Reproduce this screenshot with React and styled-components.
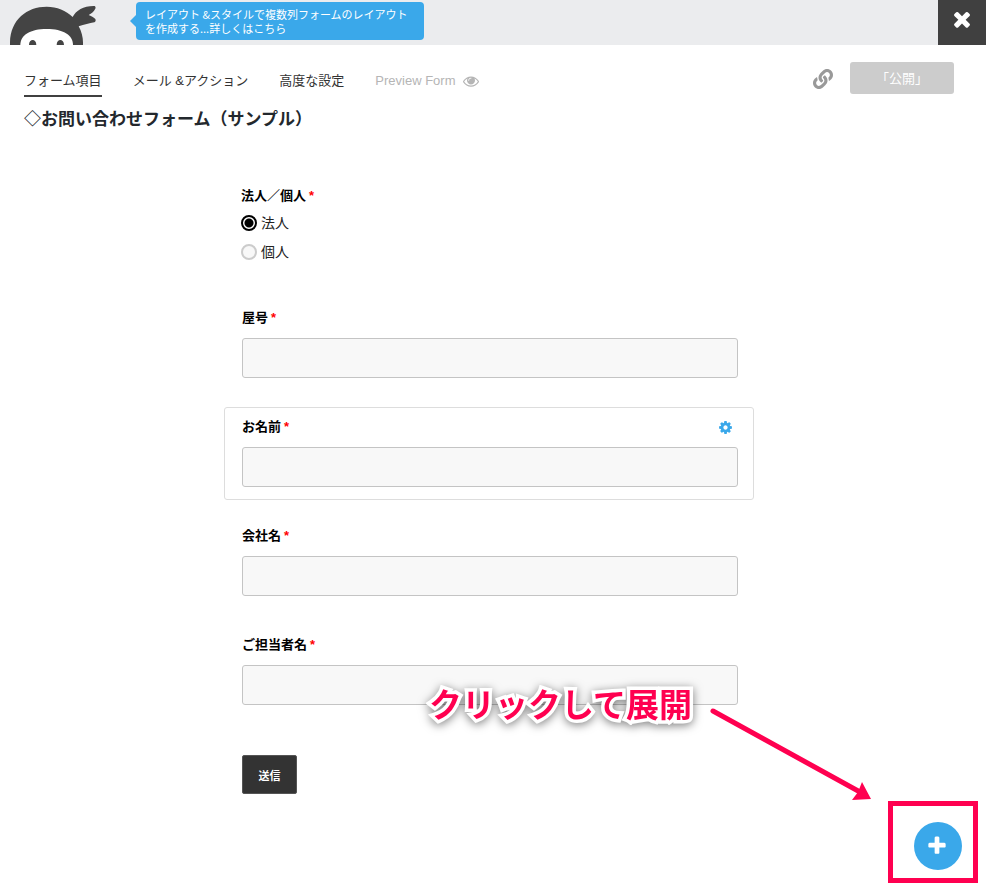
import React, { useState } from 'react';
import styled, { createGlobalStyle } from 'styled-components';
import { FaLink } from 'react-icons/fa';

const GlobalStyle = createGlobalStyle`
  * {
    box-sizing: border-box;
  }

  body {
    margin: 0;
    background: #fff;
    color: #222;
    font-family: "Liberation Sans", "Noto Sans CJK JP", sans-serif;
    font-size: 13px;
    line-height: 20px;
  }

  button, input {
    font-family: inherit;
  }
`;

const Page = styled.div`
  min-height: 100vh;
`;

const TopBar = styled.header`
  display: flex;
  align-items: flex-start;
  height: 45px;
  background: #ebecee;
`;

const LogoLink = styled.a`
  display: flex;
  align-self: flex-end;
  margin-left: 10px;
`;

const Bubble = styled.a`
  position: relative;
  max-width: 288px;
  margin: 2px 0 0 39px;
  padding: 5px 9px;
  border-radius: 4px;
  background: #3aa8ea;
  color: #fff;
  font-family: "Noto Sans CJK JP", sans-serif;
  font-size: 11px;
  line-height: 14px;
  text-decoration: none;

  &::before {
    content: "";
    position: absolute;
    top: 13px;
    left: -6px;
    border: 6px solid transparent;
    border-left-width: 0;
    border-right-color: #3aa8ea;
  }
`;

const CloseButton = styled.button`
  width: 48px;
  height: 45px;
  margin-left: auto;
  padding: 0 0 4px;
  border: 0;
  background: #404040;
  color: #fff;
`;

const Nav = styled.nav`
  display: flex;
  align-items: flex-start;
  padding: 17px 32px 0 24px;
`;

const Tabs = styled.div`
  display: flex;
  gap: 31px;
  padding-top: 8px;
`;

const Tab = styled.a`
  display: flex;
  align-items: center;
  gap: 8px;
  height: 27px;
  padding-bottom: 3px;
  border-bottom: 2px solid ${props => (props.$active ? '#404040' : 'transparent')};
  color: ${props => (props.$muted ? '#b5b5b5' : '#333')};
  text-decoration: none;
  white-space: nowrap;
`;

const NavActions = styled.div`
  display: flex;
  align-items: center;
  gap: 17px;
  margin-left: auto;
`;

const IconButton = styled.button`
  padding: 2px 0 0;
  border: 0;
  background: none;
  color: ${props => props.$color};
  line-height: 0;
`;

const PublishButton = styled.button`
  width: 104px;
  height: 32px;
  padding: 0 0 2px;
  border: 0;
  border-radius: 3px;
  background: #ccc;
  color: #fff;
  font-size: 13px;
`;

const FormTitle = styled.h1`
  margin: 11px 24px 0;
  color: #23282d;
  font-size: 17px;
  line-height: 24px;
`;

const Main = styled.main`
  padding: 44px 8px 92px 0;
`;

const Form = styled.form`
  display: flex;
  flex-direction: column;
  gap: 16px;
  max-width: 530px;
  margin: 0 auto;
`;

const Card = styled.div`
  padding: 8px 15px 12px 17px;
  border: 1px solid ${props => (props.$selected ? '#ddd' : 'transparent')};
  border-radius: 3px;
`;

const RadioCard = styled.fieldset`
  min-width: 0;
  margin: 0;
  padding: 9px 17px 20px;
  border: 0;
`;

const CardHead = styled.div`
  display: flex;
  align-items: center;
  justify-content: space-between;
  height: 20px;
  padding-right: 5px;
`;

const labelText = `
  color: #000;
  font-family: "Noto Sans CJK JP", sans-serif;
  font-size: 13px;
  font-weight: 700;
  line-height: 20px;
`;

const Label = styled.label`
  ${labelText}
`;

const Legend = styled.legend`
  ${labelText}
  float: left;
  width: 100%;
  padding: 0;
`;

const Required = styled.span`
  margin-left: 3px;
  color: #f00;
  font-family: "Liberation Sans", sans-serif;
`;

const TextInput = styled.input`
  display: block;
  width: 100%;
  height: 40px;
  margin-top: 11px;
  padding: 0 12px;
  border: 1px solid #c4c4c4;
  border-radius: 3px;
  background: #f8f8f8;
  font-size: 14px;
`;

const RadioList = styled.div`
  display: flex;
  flex-direction: column;
  gap: 9px;
  padding-top: 7px;
  clear: both;
`;

const RadioLabel = styled.label`
  display: flex;
  align-items: center;
  gap: 4px;
  color: #222;
  font-size: 14px;
`;

const Radio = styled.input`
  appearance: none;
  width: 16px;
  height: 16px;
  margin: 0;
  border: 2px solid #ccc;
  border-radius: 50%;
  background: #f8f8f8;

  &:checked {
    border-color: #000;
    background: radial-gradient(circle, #000 4px, #fff 5px);
  }
`;

const SubmitButton = styled.button`
  width: 55px;
  height: 39px;
  margin: 21px 0 0 18px;
  padding: 0;
  border: 1px solid #555;
  border-radius: 2px;
  background: #333;
  color: #fff;
  font-size: 11px;
  font-weight: 700;
`;

const AddButton = styled.button`
  position: fixed;
  right: 24px;
  bottom: 16px;
  display: flex;
  align-items: center;
  justify-content: center;
  width: 48px;
  height: 48px;
  padding: 0 2px 0 0;
  border: 0;
  border-radius: 50%;
  background: #3aa8ea;
  color: #fff;
`;

const Highlight = styled.div`
  position: fixed;
  right: 8px;
  bottom: 3px;
  width: 90px;
  height: 82px;
  border: 5px solid #ff0050;
  pointer-events: none;
`;

const Arrow = styled.svg`
  position: fixed;
  right: 114px;
  bottom: 84px;
  pointer-events: none;
`;

const Callout = styled.p`
  position: fixed;
  right: 294px;
  bottom: 160px;
  margin: 0;
  color: #ff0050;
  font-size: 33px;
  font-weight: 700;
  line-height: 40px;
  -webkit-text-stroke: 7px #fff;
  paint-order: stroke fill;
  stroke-linejoin: round;
  filter: drop-shadow(0 2px 5px rgba(0, 0, 0, 0.5));
  pointer-events: none;
`;

const icons = {
  times: 'M1490 1322q0 40-28 68l-136 136q-28 28-68 28t-68-28l-294-294-294 294q-28 28-68 28t-68-28l-136-136q-28-28-28-68t28-68l294-294-294-294q-28-28-28-68t28-68l136-136q28-28 68-28t68 28l294 294 294-294q28-28 68-28t68 28l136 136q28 28 28 68t-28 68l-294 294 294 294q28 28 28 68z',
  plus: 'M1600 736v192q0 40-28 68t-68 28h-416v416q0 40-28 68t-68 28h-192q-40 0-68-28t-28-68v-416h-416q-40 0-68-28t-28-68v-192q0-40 28-68t68-28h416v-416q0-40 28-68t68-28h192q40 0 68 28t28 68v416h416q40 0 68 28t28 68z',
  cog: 'M1152 896q0-106-75-181t-181-75-181 75-75 181 75 181 181 75 181-75 75-181zm512-109v222q0 12-8 23t-20 13l-185 28q-19 54-39 91 35 50 107 138 10 12 10 25t-9 23q-27 37-99 108t-94 71q-12 0-26-9l-138-108q-44 23-91 38-16 136-29 186-7 28-36 28h-222q-14 0-24.500-8.500t-11.500-21.500l-28-184q-49-16-90-37l-141 107q-10 9-25 9-14 0-25-11-126-114-165-168-7-10-7-23 0-12 8-23 15-21 51-66.500t54-70.500q-27-50-41-99l-183-27q-13-2-21-12.500t-8-23.500v-222q0-12 8-23t19-13l186-28q14-46 39-92-40-57-107-138-10-12-10-24 0-10 9-23 26-36 98.500-107.500t94.500-71.500q13 0 26 10l138 107q44-23 91-38 16-136 29-186 7-28 36-28h222q14 0 24.500 8.500t11.500 21.500l28 184q49 16 90 37l142-107q9-9 24-9 13 0 25 10 129 119 165 170 7 8 7 22 0 12-8 23-15 21-51 66.500t-54 70.500q26 50 41 98l183 28q13 2 21 12.500t8 23.500z',
  eye: 'M1664 960q-152-236-381-353 61 104 61 225 0 185-131.500 316.500t-316.500 131.500-316.500-131.500-131.500-316.500q0-121 61-225-229 117-381 353 133 205 333.500 326.500t434.500 121.500 434.500-121.500 333.500-326.500zm-720-384q0-20-14-34t-34-14q-125 0-214.500 89.500t-89.500 214.500q0 20 14 34t34 14 34-14 14-34q0-86 61-147t147-61q20 0 34-14t14-34zm848 384q0 34-20 69-140 230-376.500 368.500t-499.500 138.500-499.500-139-376.500-368q-20-35-20-69t20-69q140-229 376.500-368t499.500-139 499.500 139 376.500 368q20 35 20 69z',
};

function Icon({ name, size }) {
  return (
    <svg width={size} height={size} viewBox="0 0 1792 1792" fill="currentColor" aria-hidden="true">
      <path d={icons[name]} />
    </svg>
  );
}

function NinjaLogo() {
  return (
    <svg width="87" height="40" viewBox="30 15 261 120" aria-hidden="true">
      <path
        fill="#444"
        d="M30 135C28 62 78 20 140 20c31 0 58 11 78 31C228 31 252 17 284 18c4 2 3 7 1 10-4 7-10 13-19 17 10 4 16 8 20 12 2 4 1 8-3 10-15 3-30 6-47 12 9 16 14 35 13 56z"
      />
      <path fill="#fff" d="M61 135c0-30 30-48 79-48s79 18 79 48z" />
      <path fill="#444" d="M87 135c0-20 22-20 22 0zM170 135c0-20 22-20 22 0z" />
    </svg>
  );
}

const textFields = [
  { id: 'shop', label: '屋号' },
  { id: 'name', label: 'お名前', selected: true },
  { id: 'company', label: '会社名' },
  { id: 'person', label: 'ご担当者名' },
];

function TextField({ id, label, selected }) {
  return (
    <Card $selected={selected}>
      <CardHead>
        <Label htmlFor={id}>{label}<Required>*</Required></Label>
        {selected && (
          <IconButton type="button" $color="#3aa8ea" aria-label="設定">
            <Icon name="cog" size={15} />
          </IconButton>
        )}
      </CardHead>
      <TextInput id={id} type="text" />
    </Card>
  );
}

function App() {
  const [kind, setKind] = useState('法人');

  return (
    <Page>
      <GlobalStyle />
      <TopBar>
        <LogoLink href="#" aria-label="Ninja Forms"><NinjaLogo /></LogoLink>
        <Bubble href="#">レイアウト &amp;スタイルで複数列フォームのレイアウトを作成する...詳しくはこちら</Bubble>
        <CloseButton type="button" aria-label="閉じる"><Icon name="times" size={24} /></CloseButton>
      </TopBar>

      <Nav>
        <Tabs>
          <Tab href="#" $active>フォーム項目</Tab>
          <Tab href="#">メール &amp;アクション</Tab>
          <Tab href="#">高度な設定</Tab>
          <Tab href="#" $muted>Preview Form <Icon name="eye" size={16} /></Tab>
        </Tabs>
        <NavActions>
          <IconButton type="button" $color="#999" aria-label="リンク">
            <FaLink size={20} />
          </IconButton>
          <PublishButton type="button">「公開」</PublishButton>
        </NavActions>
      </Nav>
      <FormTitle>◇お問い合わせフォーム（サンプル）</FormTitle>

      <Main>
        <Form onSubmit={e => e.preventDefault()}>
          <RadioCard>
            <Legend>法人／個人<Required>*</Required></Legend>
            <RadioList>
              {['法人', '個人'].map(value => (
                <RadioLabel key={value}>
                  <Radio
                    type="radio"
                    name="kind"
                    value={value}
                    checked={kind === value}
                    onChange={() => setKind(value)}
                  />
                  {value}
                </RadioLabel>
              ))}
            </RadioList>
          </RadioCard>
          {textFields.map(field => (
            <TextField key={field.id} {...field} />
          ))}
          <div>
            <SubmitButton type="submit">送信</SubmitButton>
          </div>
        </Form>
      </Main>

      <AddButton type="button" aria-label="追加"><Icon name="plus" size={22} /></AddButton>

      <Highlight />
      <Arrow width="162" height="96" viewBox="0 0 162 96" aria-hidden="true">
        <path d="M3 5L150 86" stroke="#ff0050" strokeWidth="5" strokeLinecap="round" />
        <path d="M152 76L161 93L142 94L148 86z" fill="#ff0050" />
      </Arrow>
      <Callout>クリックして展開</Callout>
    </Page>
  );
}

export default App;
